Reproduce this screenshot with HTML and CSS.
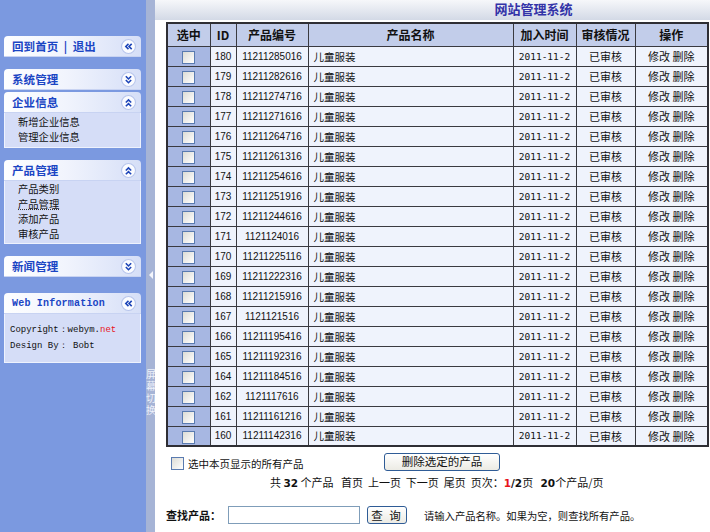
FILE: index.html
```html
<!DOCTYPE html>
<html lang="zh">
<head>
<meta charset="utf-8">
<title>网站管理系统</title>
<link rel="stylesheet" href="styles.css">
</head>
<body>
<div class="page">
  <aside class="sidebar">
    <div class="panel p-home">
      <div class="ph"><span class="ph-title">回到首页 &nbsp;| &nbsp;退出</span>
        <svg class="ico" viewBox="0 0 14 14"><circle cx="7" cy="7" r="6.5"/><path d="M7 4.5 4.5 7 7 9.5M10 4.5 7.5 7 10 9.5"/></svg></div>
    </div>
    <div class="panel p-sys">
      <div class="ph"><span class="ph-title">系统管理</span>
        <svg class="ico" viewBox="0 0 14 14"><circle cx="7" cy="7" r="6.5"/><path d="M4.5 4 7 6.5 9.5 4M4.5 7.5 7 10 9.5 7.5"/></svg></div>
      <div class="ph ph-second"><span class="ph-title">企业信息</span>
        <svg class="ico" viewBox="0 0 14 14"><circle cx="7" cy="7" r="6.5"/><path d="M4.5 7 7 4.5 9.5 7M4.5 10.5 7 8 9.5 10.5"/></svg></div>
      <div class="pc pc-ent">
        <div>新增企业信息</div>
        <div>管理企业信息</div>
      </div>
    </div>
    <div class="panel p-prod">
      <div class="ph"><span class="ph-title">产品管理</span>
        <svg class="ico" viewBox="0 0 14 14"><circle cx="7" cy="7" r="6.5"/><path d="M4.5 7 7 4.5 9.5 7M4.5 10.5 7 8 9.5 10.5"/></svg></div>
      <div class="pc pc-prod">
        <div>产品类别</div>
        <div class="dotted">产品管理</div>
        <div>添加产品</div>
        <div>审核产品</div>
      </div>
    </div>
    <div class="panel p-news">
      <div class="ph"><span class="ph-title">新闻管理</span>
        <svg class="ico" viewBox="0 0 14 14"><circle cx="7" cy="7" r="6.5"/><path d="M4.5 4 7 6.5 9.5 4M4.5 7.5 7 10 9.5 7.5"/></svg></div>
    </div>
    <div class="panel p-info">
      <div class="ph"><span class="ph-title info-title">Web Information</span>
        <svg class="ico" viewBox="0 0 14 14"><circle cx="7" cy="7" r="6.5"/><path d="M7 4.5 4.5 7 7 9.5M10 4.5 7.5 7 10 9.5"/></svg></div>
      <div class="pc pc-info">
        <div>Copyright：webym.<span class="red">net</span></div>
        <div>Design By： Bobt</div>
      </div>
    </div>
  </aside>
  <div class="splitter">
    <span class="arrow"></span>
    <span class="switch">屏幕切换</span>
  </div>
  <main class="main">
    <header class="top"><h1>网站管理系统</h1></header>
    <table class="grid">
      <colgroup>
        <col class="c1"><col class="c2"><col class="c3"><col class="c4"><col class="c5"><col class="c6"><col class="c7">
      </colgroup>
      <thead>
        <tr><th>选中</th><th>ID</th><th>产品编号</th><th>产品名称</th><th>加入时间</th><th>审核情况</th><th>操作</th></tr>
      </thead>
      <tbody>
        <tr><td class="ck"><span class="box"></span></td><td class="num">180</td><td class="num">11211285016</td><td class="name">儿童服装</td><td class="date">2011-11-2</td><td>已审核</td><td>修改 删除</td></tr>
        <tr><td class="ck"><span class="box"></span></td><td class="num">179</td><td class="num">11211282616</td><td class="name">儿童服装</td><td class="date">2011-11-2</td><td>已审核</td><td>修改 删除</td></tr>
        <tr><td class="ck"><span class="box"></span></td><td class="num">178</td><td class="num">11211274716</td><td class="name">儿童服装</td><td class="date">2011-11-2</td><td>已审核</td><td>修改 删除</td></tr>
        <tr><td class="ck"><span class="box"></span></td><td class="num">177</td><td class="num">11211271616</td><td class="name">儿童服装</td><td class="date">2011-11-2</td><td>已审核</td><td>修改 删除</td></tr>
        <tr><td class="ck"><span class="box"></span></td><td class="num">176</td><td class="num">11211264716</td><td class="name">儿童服装</td><td class="date">2011-11-2</td><td>已审核</td><td>修改 删除</td></tr>
        <tr><td class="ck"><span class="box"></span></td><td class="num">175</td><td class="num">11211261316</td><td class="name">儿童服装</td><td class="date">2011-11-2</td><td>已审核</td><td>修改 删除</td></tr>
        <tr><td class="ck"><span class="box"></span></td><td class="num">174</td><td class="num">11211254616</td><td class="name">儿童服装</td><td class="date">2011-11-2</td><td>已审核</td><td>修改 删除</td></tr>
        <tr><td class="ck"><span class="box"></span></td><td class="num">173</td><td class="num">11211251916</td><td class="name">儿童服装</td><td class="date">2011-11-2</td><td>已审核</td><td>修改 删除</td></tr>
        <tr><td class="ck"><span class="box"></span></td><td class="num">172</td><td class="num">11211244616</td><td class="name">儿童服装</td><td class="date">2011-11-2</td><td>已审核</td><td>修改 删除</td></tr>
        <tr><td class="ck"><span class="box"></span></td><td class="num">171</td><td class="num">1121124016</td><td class="name">儿童服装</td><td class="date">2011-11-2</td><td>已审核</td><td>修改 删除</td></tr>
        <tr><td class="ck"><span class="box"></span></td><td class="num">170</td><td class="num">11211225116</td><td class="name">儿童服装</td><td class="date">2011-11-2</td><td>已审核</td><td>修改 删除</td></tr>
        <tr><td class="ck"><span class="box"></span></td><td class="num">169</td><td class="num">11211222316</td><td class="name">儿童服装</td><td class="date">2011-11-2</td><td>已审核</td><td>修改 删除</td></tr>
        <tr><td class="ck"><span class="box"></span></td><td class="num">168</td><td class="num">11211215916</td><td class="name">儿童服装</td><td class="date">2011-11-2</td><td>已审核</td><td>修改 删除</td></tr>
        <tr><td class="ck"><span class="box"></span></td><td class="num">167</td><td class="num">1121121516</td><td class="name">儿童服装</td><td class="date">2011-11-2</td><td>已审核</td><td>修改 删除</td></tr>
        <tr><td class="ck"><span class="box"></span></td><td class="num">166</td><td class="num">11211195416</td><td class="name">儿童服装</td><td class="date">2011-11-2</td><td>已审核</td><td>修改 删除</td></tr>
        <tr><td class="ck"><span class="box"></span></td><td class="num">165</td><td class="num">11211192316</td><td class="name">儿童服装</td><td class="date">2011-11-2</td><td>已审核</td><td>修改 删除</td></tr>
        <tr><td class="ck"><span class="box"></span></td><td class="num">164</td><td class="num">11211184516</td><td class="name">儿童服装</td><td class="date">2011-11-2</td><td>已审核</td><td>修改 删除</td></tr>
        <tr><td class="ck"><span class="box"></span></td><td class="num">162</td><td class="num">1121117616</td><td class="name">儿童服装</td><td class="date">2011-11-2</td><td>已审核</td><td>修改 删除</td></tr>
        <tr><td class="ck"><span class="box"></span></td><td class="num">161</td><td class="num">11211161216</td><td class="name">儿童服装</td><td class="date">2011-11-2</td><td>已审核</td><td>修改 删除</td></tr>
        <tr><td class="ck"><span class="box"></span></td><td class="num">160</td><td class="num">11211142316</td><td class="name">儿童服装</td><td class="date">2011-11-2</td><td>已审核</td><td>修改 删除</td></tr>
      </tbody>
    </table>
    <div class="actions">
      <label class="selall"><span class="box"></span>选中本页显示的所有产品</label>
      <button class="btn btn-del" type="button">删除选定的产品</button>
    </div>
    <div class="pager">共 <b>32</b> 个产品 &nbsp; 首页 &nbsp;上一页 &nbsp;下一页 &nbsp;尾页 &nbsp;页次：<b class="red">1</b><b>/2</b>页 &nbsp; <b>20</b>个产品/页</div>
    <div class="search">
      <span class="search-label">查找产品：</span>
      <span class="input"></span>
      <button class="btn btn-q" type="button">查 询</button>
      <span class="hint">请输入产品名称。如果为空，则查找所有产品。</span>
    </div>
  </main>
</div>
</body>
</html>
```

FILE: styles.css
```css
* { box-sizing: border-box; }
html, body { margin: 0; padding: 0; }
body {
  font-family: "Noto Sans CJK SC", "Liberation Sans", sans-serif;
  font-size: 11px;
  color: #111;
  background: #fff;
  overflow: hidden;
}
.page {
  display: flex;
  height: 532px;
}

/* Sidebar */
.sidebar {
  width: 146px;
  flex: none;
  background: #7b99e0;
  padding: 36px 0 0 4px;
}
.panel {
  width: 137px;
  margin-bottom: 12px;
}
.p-news { margin-bottom: 16px; }
.ph {
  height: 21px;
  display: flex;
  align-items: center;
  justify-content: space-between;
  padding: 0 5px 0 8px;
  background: linear-gradient(90deg, #fdfeff 0%, #f1f4fd 45%, #d6dff7 100%);
  border-radius: 4px 4px 0 0;
  border-bottom: 1px solid #c8d3f2;
}
.ph-second { margin-top: 2px; }
.ph-title {
  font-weight: bold;
  color: #1a45c4;
  font-size: 11.5px;
  letter-spacing: 0.1px;
}
.info-title {
  font-family: "Liberation Mono", "DejaVu Sans Mono", monospace;
  font-size: 10px;
  letter-spacing: 0.2px;
}
.ico {
  width: 15px;
  height: 15px;
  flex: none;
}
.ico circle { fill: #fbfcff; stroke: #b7c5ec; stroke-width: 1; }
.ico path { fill: none; stroke: #1d45b8; stroke-width: 1.5; }
.pc {
  background: #d5ddf7;
  border: 1px solid #eef2fd;
  border-top: none;
  padding: 1px 0 3px 13px;
  font-size: 10.3px;
  line-height: 15px;
  color: #111;
}
.pc-prod { padding-top: 0; padding-bottom: 2px; }
.dotted { text-decoration: underline dotted #333; }
.pc-info {
  font-family: "Liberation Mono", "DejaVu Sans Mono", monospace;
  font-size: 9px;
  padding: 8px 0 8px 5px;
  line-height: 16px;
}
.red { color: #e8141c; }

/* Splitter */
.splitter {
  width: 9px;
  flex: none;
  background: #a6b4d6;
  display: flex;
  flex-direction: column;
  align-items: center;
  padding-top: 271px;
}
.arrow {
  width: 0; height: 0;
  border-top: 4px solid transparent;
  border-bottom: 4px solid transparent;
  border-right: 4px solid #f4f6fc;
}
.switch {
  margin-top: 90px;
  color: #eef2fb;
  font-size: 10px;
  line-height: 10px;
  writing-mode: vertical-rl;
  letter-spacing: 2px;
}

/* Main */
.main {
  flex: 1;
  padding: 0 3px 0 11px;
  background: #fff;
}
.top {
  height: 20px;
  margin: 0 -3px 2px -11px;
  background: linear-gradient(#f6f7fa, #d3d9e6);
  text-align: center;
}
.top h1 {
  margin: 0;
  font-size: 13px;
  font-weight: bold;
  color: #3333a8;
  line-height: 17px;
  padding-left: 200px;
}
.grid {
  width: 541px;
  border-collapse: collapse;
  table-layout: fixed;
  border: 2px solid #2e2e34;
}
.c1 { width: 43px; } .c2 { width: 26px; } .c3 { width: 72px; } .c4 { width: 205px; }
.c5 { width: 63px; } .c6 { width: 59px; } .c7 { width: 73px; }
.grid th, .grid td {
  border: 1px solid #3a3a40;
  text-align: center;
  padding: 0;
  white-space: nowrap;
  overflow: hidden;
}
.grid th {
  height: 23px;
  background: #c2cdea;
  font-weight: bold;
  font-size: 12px;
  color: #111;
}
.grid td {
  height: 20px;
  background: #eff3fc;
  color: #111;
  font-size: 11px;
}
.grid td.num {
  font-family: "Liberation Sans", Arial, sans-serif;
  font-size: 10px;
}
.grid td.date { font-family: "DejaVu Sans Mono", monospace; font-size: 9.5px; }
.grid td.name { text-align: left; padding-left: 5px; font-size: 10.5px; }
.grid td.ck { background: #a7b7e2; }
.box {
  display: inline-block;
  width: 13px;
  height: 13px;
  border: 1px solid #5a7bb0;
  background: linear-gradient(135deg, #dcdcd6, #ffffff);
  vertical-align: middle;
}

.actions {
  display: flex;
  align-items: center;
  margin-top: 5px;
  padding-left: 5px;
  height: 19px;
}
.selall {
  display: flex;
  align-items: center;
  gap: 4px;
  width: 213px;
  margin-top: 3px;
  font-size: 10.5px;
}
.btn {
  font-family: "Noto Sans CJK SC", sans-serif;
  font-size: 11.5px;
  color: #111;
  background: linear-gradient(#ffffff, #ecebe4);
  border: 1px solid #2f5c96;
  border-radius: 3px;
  padding: 0;
  line-height: 15px;
  height: 18px;
}
.btn-del { width: 116px; }
.pager {
  margin-top: 3px;
  padding-left: 104px;
  line-height: 16px;
}
.pager b { font-family: "DejaVu Sans", sans-serif; font-size: 10.5px; }
.search {
  display: flex;
  align-items: center;
  margin-top: 15px;
  height: 18px;
}
.search-label { font-weight: bold; width: 62px; }
.input {
  width: 132px;
  height: 18px;
  border: 1px solid #7f9db9;
  background: #fff;
}
.btn-q { width: 40px; margin-left: 7px; letter-spacing: 2px; }
.hint { margin-left: 17px; font-size: 10.3px; }
```
